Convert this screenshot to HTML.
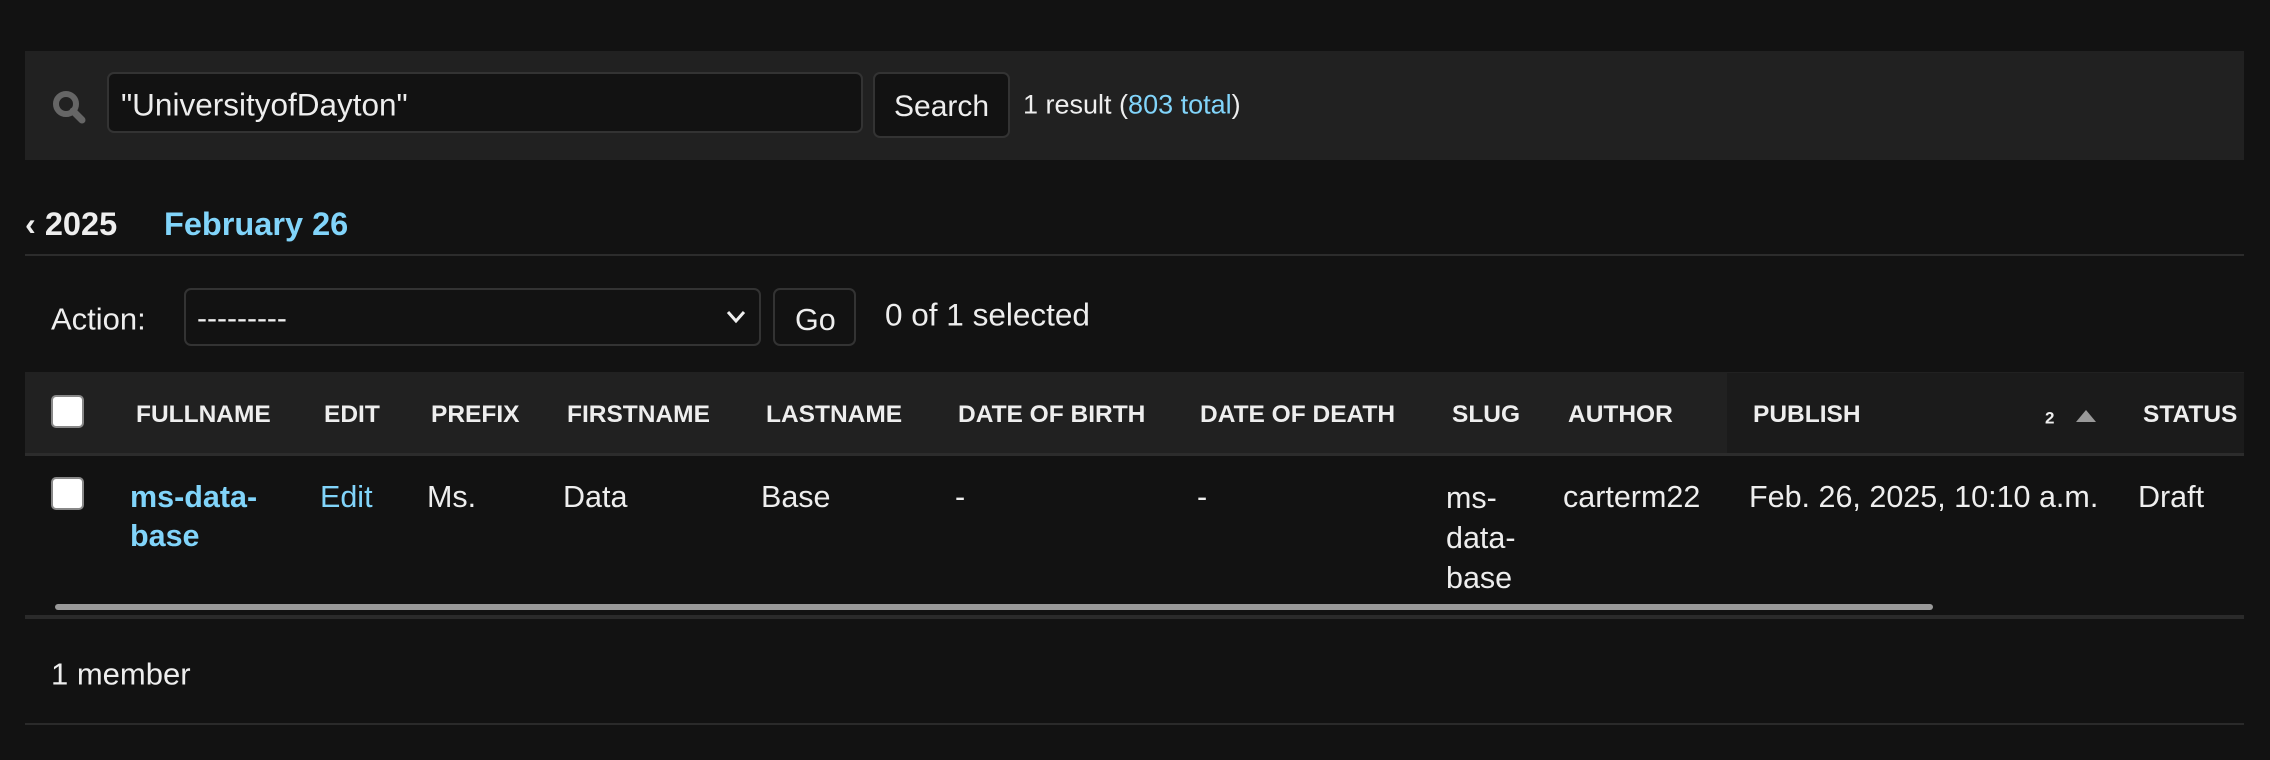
<!DOCTYPE html>
<html><head><meta charset="utf-8"><style>
*{margin:0;padding:0;box-sizing:border-box}
body{width:2270px;height:760px;background:#121212;color:#eee;font-family:"Liberation Sans",sans-serif;position:relative;overflow:hidden}
.a{position:absolute;white-space:nowrap}
.c{line-height:1;transform:translateY(-50%)}
.lk{color:#81d4fa}
.h{font-weight:bold;font-size:24.5px;color:#eee}
.t{font-size:30.5px}
.cb{position:absolute;width:33px;height:33px;background:#fff;border:2px solid #888;border-radius:5px}
.bx{position:absolute;border:2px solid #333;border-radius:7px;background:#121212}
</style></head><body>
<div class="a" style="left:25px;top:51px;width:2219px;height:109px;background:#212121"></div>
<svg class="a" style="left:51px;top:90px" width="36" height="34" viewBox="0 0 36 34"><circle cx="15" cy="14" r="10" fill="none" stroke="#666" stroke-width="6"/><path d="M22 21 L31 30" stroke="#666" stroke-width="7" stroke-linecap="round"/></svg>
<div class="bx" style="left:107px;top:72px;width:756px;height:61px"></div>
<div class="a c" style="left:121px;top:105px;font-size:31.5px">"UniversityofDayton"</div>
<div class="bx" style="left:873px;top:72px;width:137px;height:66px"></div>
<div class="a c" style="left:894px;top:107px;font-size:30px">Search</div>
<div class="a c" style="left:1023px;top:105px;font-size:27px">1 result (<span class="lk">803 total</span>)</div>
<div class="a c" style="left:25px;top:224px;font-size:32.5px;font-weight:bold">‹ 2025</div>
<div class="a c lk" style="left:164px;top:224px;font-size:32.5px;font-weight:bold">February 26</div>
<div class="a" style="left:25px;top:254px;width:2219px;height:2px;background:#2c2c2c"></div>
<div class="a c" style="left:51px;top:319px;font-size:31px">Action:</div>
<div class="bx" style="left:184px;top:288px;width:577px;height:58px"></div>
<div class="a c" style="left:197px;top:319px;font-size:30px">---------</div>
<svg class="a" style="left:726px;top:310px" width="20" height="14"><path d="M2 2 L10 11 L18 2" fill="none" stroke="#eee" stroke-width="3"/></svg>
<div class="bx" style="left:773px;top:288px;width:83px;height:58px"></div>
<div class="a c" style="left:795px;top:320px;font-size:30.5px">Go</div>
<div class="a c" style="left:885px;top:315px;font-size:31.5px">0 of 1 selected</div>
<div class="a" style="left:25px;top:372px;width:2219px;height:82px;background:#212121"></div>
<div class="a" style="left:1727px;top:373px;width:517px;height:80px;background:#1b1b1b"></div>
<div class="a" style="left:25px;top:453px;width:2219px;height:3px;background:#2c2c2c"></div>
<div class="cb" style="left:51px;top:395px"></div>
<div class="a c h" style="left:136px;top:415px">FULLNAME</div>
<div class="a c h" style="left:324px;top:415px">EDIT</div>
<div class="a c h" style="left:431px;top:415px">PREFIX</div>
<div class="a c h" style="left:567px;top:415px">FIRSTNAME</div>
<div class="a c h" style="left:766px;top:415px">LASTNAME</div>
<div class="a c h" style="left:958px;top:415px">DATE OF BIRTH</div>
<div class="a c h" style="left:1200px;top:415px">DATE OF DEATH</div>
<div class="a c h" style="left:1452px;top:415px">SLUG</div>
<div class="a c h" style="left:1568px;top:415px">AUTHOR</div>
<div class="a c h" style="left:1753px;top:415px">PUBLISH</div>
<div class="a c" style="left:2045px;top:418px;font-size:17px;font-weight:bold">2</div>
<svg class="a" style="left:2075px;top:409px" width="22" height="14"><path d="M11 1 L21 13 L1 13 Z" fill="#999"/></svg>
<div class="a c h" style="left:2143px;top:415px">STATUS</div>
<div class="cb" style="left:51px;top:477px"></div>
<div class="a t lk" style="left:130px;top:478px;line-height:39px;font-weight:bold">ms-data-<br>base</div>
<div class="a t lk" style="left:320px;top:478px;line-height:39px">Edit</div>
<div class="a t" style="left:427px;top:478px;line-height:39px">Ms.</div>
<div class="a t" style="left:563px;top:478px;line-height:39px">Data</div>
<div class="a t" style="left:761px;top:478px;line-height:39px">Base</div>
<div class="a t" style="left:955px;top:478px;line-height:39px">-</div>
<div class="a t" style="left:1197px;top:478px;line-height:39px">-</div>
<div class="a t" style="left:1446px;top:478px;line-height:40px">ms-<br>data-<br>base</div>
<div class="a t" style="left:1563px;top:478px;line-height:39px">carterm22</div>
<div class="a t" style="left:1749px;top:478px;line-height:39px">Feb. 26, 2025, 10:10 a.m.</div>
<div class="a t" style="left:2138px;top:478px;line-height:39px">Draft</div>
<div class="a" style="left:55px;top:604px;width:1878px;height:6px;background:#999;border-radius:3px"></div>
<div class="a" style="left:25px;top:615px;width:2219px;height:4px;background:#2a2a2a"></div>
<div class="a c" style="left:51px;top:674px;font-size:31px">1 member</div>
<div class="a" style="left:25px;top:723px;width:2219px;height:2px;background:#2a2a2a"></div>
</body></html>
